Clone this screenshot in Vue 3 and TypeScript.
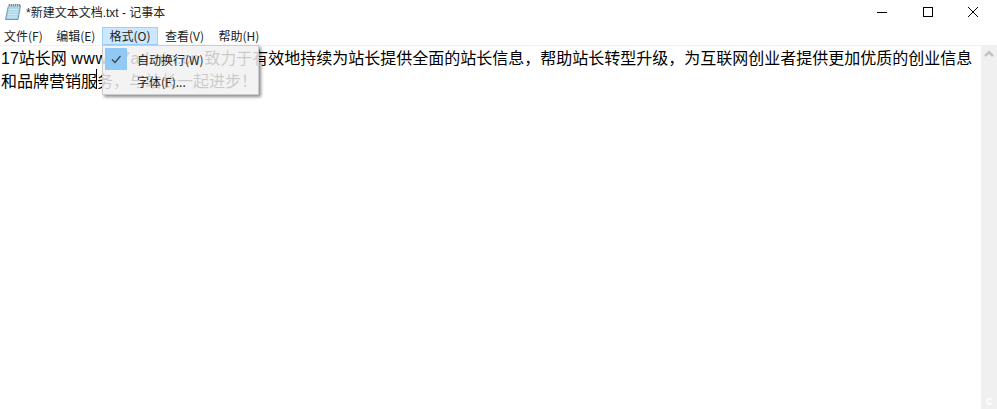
<script setup lang="ts">
const menus: string[] = ['文件(F)', '编辑(E)', '格式(O)', '查看(V)', '帮助(H)']
</script>

<template>
  <div class="win">
    <header class="title">
      <svg class="app" width="16" height="17" viewBox="0 0 16 17">
        <path d="M3.5 2.5 L15.5 2.5 L13 16.5 L0.5 16.5 Z" fill="#a9d6ea" stroke="#6f97ad" stroke-width="1" />
        <path d="M4 6.5H13.5M3.4 9H13M3 11.5H12.5M2.5 14H12" stroke="#d3ecf6" stroke-width="1" />
        <path d="M3.5 1H15.5L15 4H3Z" fill="#c3ced3" />
        <path d="M4.5 1V3.5M6.5 1V3.5M8.5 1V3.5M10.5 1V3.5M12.5 1V3.5M14.5 1V3.5" stroke="#7d8a92" stroke-width="1" />
      </svg>
      <span class="name">*新建文本文档.txt - 记事本</span>
      <div class="controls">
        <button class="ctl"><svg width="10" height="10" viewBox="0 0 10 10"><path d="M0 5.5H10" stroke="#000" /></svg></button>
        <button class="ctl"><svg width="10" height="10" viewBox="0 0 10 10"><rect x="0.5" y="0.5" width="9" height="9" fill="none" stroke="#000" /></svg></button>
        <button class="ctl"><svg width="10" height="10" viewBox="0 0 10 10"><path d="M0 0L10 10M10 0L0 10" stroke="#000" /></svg></button>
      </div>
    </header>
    <nav class="menubar">
      <span v-for="(m, i) in menus" :key="m" class="menu" :class="{ active: i === 2 }">{{ m }}</span>
    </nav>
    <main class="body">
      <div class="text">17站长网 <span class="domain">www.17admin.cn</span> 致力于有效地持续为站长提供全面的站长信息，帮助站长转型升级，为互联网创业者提供更加优质的创业信息和品牌营销服务，与站长一起进步！</div>
      <div class="scroll">
        <svg width="16" height="16" viewBox="0 0 16 16"><path d="M4 10L8 6L12 10" fill="none" stroke="#c4c4c4" stroke-width="2.5" /></svg>
        <span class="grip">c</span>
      </div>
    </main>
    <i class="caret"></i>
    <div class="dropdown">
      <div class="item checked">
        <span class="gutter"><svg width="12" height="12" viewBox="0 0 12 12"><path d="M2 6.5L5 9.5L10.5 3" fill="none" stroke="#444" stroke-width="1.3" /></svg></span>
        <span>自动换行(W)</span>
      </div>
      <div class="item">
        <span class="gutter"></span>
        <span>字体(F)...</span>
      </div>
    </div>
  </div>
</template>

<style>
html, body { margin: 0; background: #fff; }
</style>

<style scoped>
.win {
  position: relative;
  width: 997px;
  height: 409px;
  overflow: hidden;
  background: #fff;
  color: #000;
  font-family: "Noto Sans CJK SC", "Liberation Sans", sans-serif;
  display: flex;
  flex-direction: column;
}
.title {
  height: 23px;
  display: flex;
  align-items: center;
  padding-left: 5px;
  font-size: 12px;
  flex: none;
}
.app { margin-right: 5px; }
.name { color: #222; font-family: "Liberation Sans", "Noto Sans CJK SC", sans-serif; }
.controls { margin-left: auto; display: flex; padding-right: 1px; }
.ctl {
  width: 45.5px;
  height: 23px;
  border: 0;
  padding: 0;
  background: none;
  display: flex;
  align-items: center;
  justify-content: center;
}
.menubar {
  height: 22px;
  display: flex;
  align-items: flex-end;
  flex: none;
  font-size: 12px;
  color: #222;
}
.menu {
  padding: 0 6px;
  border: 1px solid transparent;
  height: 16px;
  line-height: 16px;
}
.menu:first-child { padding-left: 3px; padding-right: 5.5px; }
.menu:nth-child(3) { padding-right: 6.5px; }
.menu:nth-child(4) { padding-right: 6.5px; }
.menu.active { background: #cce8ff; border-color: #99d1ff; }
.body {
  flex: 1;
  display: flex;
  border-top: 1px solid #f0f0f0;
  min-height: 0;
}
.text {
  flex: 1;
  padding: 1px 3px 0 1px;
  font-size: 16px;
  line-height: 23px;
  font-family: "Liberation Sans", "Noto Sans CJK SC", sans-serif;
  color: #000;
}
.domain { letter-spacing: 0.55px; }
.scroll {
  width: 16px;
  background: #f0f0f0;
  display: flex;
  flex-direction: column;
  justify-content: space-between;
  align-items: center;
}
.grip {
  color: #fff;
  font: bold 12px/14px "Liberation Sans", sans-serif;
  margin-bottom: 1px;
}
.caret {
  position: absolute;
  left: 96px;
  top: 69px;
  width: 1px;
  height: 20px;
  background: #000;
}
.dropdown {
  position: absolute;
  left: 102px;
  top: 45px;
  width: 157px;
  height: 50px;
  padding: 2px;
  box-sizing: border-box;
  background: rgba(241, 241, 241, 0.84);
  border: 1px solid #ccc;
  box-shadow: 2px 2px 3px rgba(0, 0, 0, 0.45);
  font-size: 12px;
  color: #222;
}
.item {
  height: 22px;
  display: flex;
  align-items: center;
}
.gutter {
  width: 32px;
  height: 22px;
  display: flex;
  align-items: center;
  justify-content: center;
  flex: none;
}
.checked .gutter {
  width: 22px;
  margin-right: 10px;
  background: #90c8f6;
}
</style>
